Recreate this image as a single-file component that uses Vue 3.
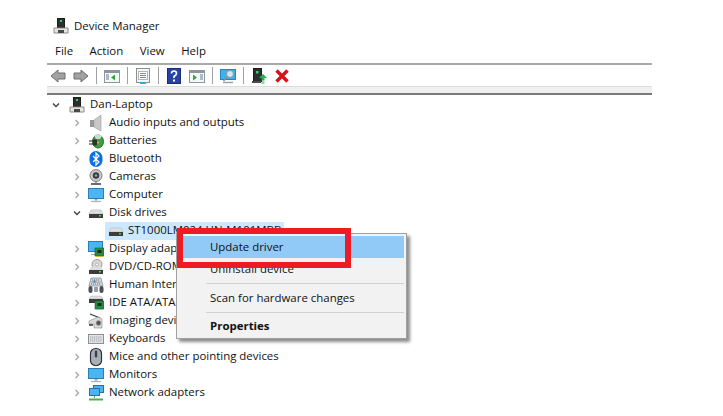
<script setup>
const menus = ['File', 'Action', 'View', 'Help']
const tools = ['back', 'forward', 'sep', 'panel-left', 'sep', 'sheet', 'sep', 'help', 'panel-right', 'sep', 'scan', 'sep', 'update', 'remove']
const rows = [
  { label: 'Audio inputs and outputs', icon: 'audio' },
  { label: 'Batteries', icon: 'battery' },
  { label: 'Bluetooth', icon: 'bluetooth' },
  { label: 'Cameras', icon: 'camera' },
  { label: 'Computer', icon: 'monitor' },
  { label: 'Disk drives', icon: 'disk', open: true },
  { label: 'ST1000LM024 HN-M101MBB', icon: 'disk', child: true },
  { label: 'Display adapters', icon: 'display' },
  { label: 'DVD/CD-ROM drives', icon: 'dvd' },
  { label: 'Human Interface Devices', icon: 'hid' },
  { label: 'IDE ATA/ATAPI controllers', icon: 'ide' },
  { label: 'Imaging devices', icon: 'imaging' },
  { label: 'Keyboards', icon: 'keyboard' },
  { label: 'Mice and other pointing devices', icon: 'mouse' },
  { label: 'Monitors', icon: 'monitor' },
  { label: 'Network adapters', icon: 'network' }
]
</script>

<template>
  <div class="page">
    <svg class="defs" width="0" height="0" aria-hidden="true">
      <defs>
        <symbol id="pc" viewBox="0 0 16 16">
          <rect x="4.5" y="0.5" width="7" height="9" fill="#2b2f33" stroke="#1c1c1c" />
          <rect x="7" y="2" width="2" height="2" fill="#35d04a" />
          <path d="M1 10h14v5H1z" fill="#e8e6e0" stroke="#8a8a86" />
          <path d="M5 12h6v3H5z" fill="#4a4a4a" />
        </symbol>
        <symbol id="back" viewBox="0 0 16 16">
          <path d="M8 2 1 8l7 6v-3h7V5H8z" fill="#a2a2a2" stroke="#6f6f6f" />
        </symbol>
        <symbol id="forward" viewBox="0 0 16 16">
          <path d="M8 2l7 6-7 6v-3H1V5h7z" fill="#a2a2a2" stroke="#6f6f6f" />
        </symbol>
        <symbol id="panel-left" viewBox="0 0 16 16">
          <rect x="0.5" y="2.5" width="15" height="12" fill="#f6f8f8" stroke="#8d979b" />
          <rect x="1" y="3" width="14" height="2" fill="#8d979b" />
          <path d="M2 7h3M2 9h3M2 11h3" stroke="#5f7f96" />
          <path d="M11 6.500v6l-4-3z" fill="#2fa63c" />
        </symbol>
        <symbol id="panel-right" viewBox="0 0 16 16">
          <rect x="0.500" y="2.500" width="15" height="12" fill="#f6f8f8" stroke="#8d979b" />
          <rect x="1" y="3" width="14" height="2" fill="#8d979b" />
          <path d="M11 7h3M11 9h3M11 11h3" stroke="#5f7f96" />
          <path d="M4 6.500v6l4-3z" fill="#2fa63c" />
        </symbol>
        <symbol id="sheet" viewBox="0 0 16 16">
          <rect x="1.500" y="0.500" width="13" height="14" fill="#f4f5f5" stroke="#8f8f8f" />
          <rect x="3.500" y="3.500" width="9" height="8" fill="#fff" stroke="#b5b5b5" />
          <path d="M5 5.500h6M5 7.500h6M5 9.500h6" stroke="#7d8a96" />
          <rect x="5" y="14" width="6" height="2" fill="#2ea8e6" />
        </symbol>
        <symbol id="help" viewBox="0 0 16 16">
          <rect x="1.500" y="0.500" width="13" height="15" fill="#2741a8" stroke="#1b2c78" />
          <path d="M5.500 5.500Q5.500 3 8 3t2.500 2.500Q10.500 7 8 8.500V10" fill="none" stroke="#fff" stroke-width="1.600" />
          <rect x="7" y="11.500" width="2" height="2" fill="#fff" />
        </symbol>
        <symbol id="scan" viewBox="0 0 16 16">
          <rect x="0.500" y="1.500" width="15" height="10" fill="#3fb2ee" stroke="#2683c4" />
          <path d="M3 14.500h10" stroke="#9aa5ad" stroke-width="1.500" />
          <circle cx="10" cy="6" r="3.500" fill="#cfe9f7" stroke="#8a959c" />
          <path d="M7.500 8.500 3.500 13" stroke="#8a8f93" stroke-width="1.500" />
        </symbol>
        <symbol id="update" viewBox="0 0 16 16">
          <rect x="2.500" y="0.500" width="8" height="13" fill="#2b2f33" stroke="#1c1c1c" />
          <rect x="5" y="3" width="2.500" height="2.500" fill="#37d64c" />
          <path d="M1 13h9v2H1z" fill="#4a4a4a" />
          <path d="M12 6l4 4h-2.500v2h-3v-2H8z" fill="#27b14a" />
          <path d="M10.500 13h3M10.500 15h3" stroke="#27b14a" />
        </symbol>
        <symbol id="remove" viewBox="0 0 16 16">
          <path d="M2.500 2.500l11 11M13.500 2.500l-11 11" stroke="#d5121c" stroke-width="3.400" />
        </symbol>
        <symbol id="audio" viewBox="0 0 16 16">
          <path d="M2 5h4v7H2z" fill="#9b9b9b" />
          <path d="M6 5l7-5v16l-7-4z" fill="#c9c9c9" stroke="#9a9a9a" stroke-width="0.600" />
        </symbol>
        <symbol id="battery" viewBox="0 0 16 16">
          <ellipse cx="10" cy="8.500" rx="5.500" ry="6.500" fill="#3f9d47" stroke="#2b6d32" />
          <path d="M6 2.500Q10 0 14 3l-2 3H8z" fill="#cdd8cf" />
          <path d="M1 8h5M1 11h5" stroke="#222" stroke-width="1.200" />
          <rect x="5" y="6.500" width="4" height="6" rx="1" fill="#2e2e2e" />
          <path d="M9 9.500h2" stroke="#e6b13a" stroke-width="1.500" />
        </symbol>
        <symbol id="bluetooth" viewBox="0 0 16 16">
          <rect x="1.500" y="0" width="13" height="16" rx="6.500" fill="#0a6fe0" />
          <path d="M5 5l6 6-3 3V2l3 3-6 6" fill="none" stroke="#fff" stroke-width="1.200" />
        </symbol>
        <symbol id="camera" viewBox="0 0 16 16">
          <circle cx="8" cy="6.500" r="6" fill="#c9c9c9" stroke="#7f7f7f" />
          <circle cx="8" cy="6.500" r="3.200" fill="#3c3c3c" />
          <circle cx="8" cy="6.500" r="1.300" fill="#8da2b4" />
          <path d="M8 12.500v2" stroke="#888" stroke-width="1.500" />
          <path d="M3 15h10" stroke="#4a4a4a" stroke-width="1.600" />
        </symbol>
        <symbol id="monitor" viewBox="0 0 16 16">
          <rect x="0.500" y="1.500" width="15" height="10" fill="#49b6f2" stroke="#2d7eb8" />
          <path d="M6.500 12h3v1.500h-3z" fill="#9aa4ab" />
          <path d="M3 14.500h10" stroke="#a8b0b6" stroke-width="1.200" />
        </symbol>
        <symbol id="disk" viewBox="0 0 16 16">
          <path d="M3 5h10l2 4H1z" fill="#dedede" stroke="#b5b5b5" stroke-width="0.600" />
          <rect x="1" y="9" width="14" height="4" fill="#3c3c3c" />
          <rect x="11" y="10" width="2" height="1.500" fill="#3bd24f" />
        </symbol>
        <symbol id="display" viewBox="0 0 16 16">
          <rect x="0.500" y="0.500" width="14" height="10" fill="#49b6f2" stroke="#2d7eb8" />
          <path d="M3 13.500h6" stroke="#a8b0b6" stroke-width="1.200" />
          <rect x="7" y="7" width="9" height="8" fill="#2c8a3f" stroke="#1f5e2c" stroke-width="0.600" />
          <rect x="9.500" y="9" width="4" height="3" fill="#1c2b20" />
          <path d="M8 15.500h7" stroke="#d7b33c" />
        </symbol>
        <symbol id="dvd" viewBox="0 0 16 16">
          <circle cx="9" cy="5.500" r="5" fill="#d8d8d8" stroke="#9a9a9a" />
          <circle cx="9" cy="5.500" r="1.500" fill="#f5f5f5" stroke="#9a9a9a" stroke-width="0.600" />
          <path d="M3 8h10l2 3H1z" fill="#dedede" />
          <rect x="1" y="11" width="14" height="4" fill="#3c3c3c" />
          <rect x="11" y="12" width="2" height="1.500" fill="#3bd24f" />
        </symbol>
        <symbol id="hid" viewBox="0 0 16 16">
          <path d="M3 1h10l2 8H1z" fill="#d7dbe0" stroke="#7b8087" stroke-width="0.700" />
          <path d="M4 3h8M3.500 5h9M3 7h10" stroke="#70757c" stroke-dasharray="1.200 0.800" />
          <rect x="5.500" y="3.500" width="2" height="2" fill="#2f7fd6" />
          <rect x="0.500" y="9" width="4" height="7" rx="2" fill="#4a4f57" />
          <rect x="11.500" y="9" width="4" height="7" rx="2" fill="#4a4f57" />
          <rect x="6" y="10" width="4" height="5" fill="#9aa0a8" />
        </symbol>
        <symbol id="ide" viewBox="0 0 16 16">
          <path d="M3 1h10l2 3H1z" fill="#dedede" stroke="#b5b5b5" stroke-width="0.500" />
          <rect x="1" y="4" width="14" height="4" fill="#3c3c3c" />
          <rect x="7" y="6" width="9" height="8" fill="#2c8a3f" stroke="#1f5e2c" stroke-width="0.600" />
          <rect x="9.500" y="8" width="4" height="3" fill="#1c2b20" />
          <path d="M8 14.500h7" stroke="#d7b33c" />
        </symbol>
        <symbol id="imaging" viewBox="0 0 16 16">
          <path d="M2 1l10 4" stroke="#333" stroke-width="1.100" />
          <path d="M1 8l9-4 4 2v9H6v-4H1z" fill="#d9d9d9" stroke="#8c8c8c" stroke-width="0.600" />
          <circle cx="10.500" cy="10" r="2.500" fill="#555" stroke="#aaa" stroke-width="0.700" />
          <path d="M1 12h4" stroke="#222" stroke-width="1.400" />
        </symbol>
        <symbol id="keyboard" viewBox="0 0 16 16">
          <rect x="0.500" y="3.500" width="15" height="9" fill="#e3e5e8" stroke="#8c9095" />
          <path d="M2 6h12M2 8h12M2 10h12" stroke="#9b9fa5" stroke-dasharray="1.200 0.700" />
        </symbol>
        <symbol id="mouse" viewBox="0 0 16 16" overflow="visible">
          <rect x="2.500" y="-0.500" width="11" height="17" rx="5" fill="#a9afb6" stroke="#2f3338" stroke-width="1.200" />
          <rect x="6.800" y="1.500" width="2.400" height="7" rx="1.200" fill="#3b3f45" />
        </symbol>
        <symbol id="network" viewBox="0 0 16 16">
          <rect x="5.500" y="0.500" width="10" height="7" fill="#49b6f2" stroke="#2a6fa6" />
          <rect x="1.500" y="3.500" width="10" height="7" fill="#49b6f2" stroke="#2a6fa6" />
          <path d="M6.500 11v2" stroke="#7f8a92" />
          <path d="M1 14.500h14" stroke="#46b04f" stroke-width="2" />
        </symbol>
      </defs>
    </svg>

    <header class="title">
      <svg class="icon"><use href="#pc" /></svg>
      <span>Device Manager</span>
    </header>

    <nav class="menubar">
      <span v-for="m in menus" :key="m">{{ m }}</span>
    </nav>

    <div class="toolbar">
      <template v-for="(t, i) in tools" :key="i">
        <i v-if="t === 'sep'" class="sep"></i>
        <svg v-else class="tool"><use :href="'#' + t" /></svg>
      </template>
    </div>
    <div class="band"></div>

    <main class="tree">
      <div class="root">
        <svg class="chev" viewBox="0 0 8 8"><path d="M1 2.500l3 3 3-3" /></svg>
        <svg class="icon"><use href="#pc" /></svg>
        <span>Dan-Laptop</span>
      </div>
      <div v-for="r in rows" :key="r.label" class="row" :class="{ child: r.child }">
        <template v-if="r.child">
          <div class="selected">
            <svg class="icon"><use :href="'#' + r.icon" /></svg>
            <span>{{ r.label }}</span>
          </div>
        </template>
        <template v-else>
          <svg class="chev" :class="{ dark: r.open }" viewBox="0 0 8 8">
            <path :d="r.open ? 'M1 2.500l3 3 3-3' : 'M2.500 1l3 3-3 3'" />
          </svg>
          <svg class="icon"><use :href="'#' + r.icon" /></svg>
          <span>{{ r.label }}</span>
        </template>
      </div>
    </main>

    <div class="context">
      <div class="item active">Update driver</div>
      <div class="item">Uninstall device</div>
      <hr />
      <div class="item">Scan for hardware changes</div>
      <hr />
      <div class="item bold">Properties</div>
    </div>
    <div class="callout"></div>
  </div>
</template>

<style>
html, body { margin: 0; background: #fff; }
</style>

<style scoped>
.page {
  position: relative;
  width: 723px;
  height: 416px;
  overflow: hidden;
  background: #fff;
  color: #111;
  font: 11.45px/18px "Open Sans", "Noto Sans", sans-serif;
}
.defs { position: absolute; }
.icon { width: 16px; height: 16px; flex: none; overflow: visible; }
.title {
  display: flex;
  align-items: center;
  gap: 5px;
  height: 16px;
  padding: 18px 0 8px 53px;
}
.menubar {
  display: flex;
  gap: 16.5px;
  height: 18px;
  margin: 0 71px 0 47px;
  padding: 0 0 3px 8px;
  align-items: center;
}
.toolbar {
  display: flex;
  align-items: center;
  gap: 7px;
  height: 21px;
  margin: 0 71px 0 47px;
  padding-left: 3px;
  border-top: 2px solid #a9a9a9;
  background: #fff;
}
.tool { width: 16px; height: 18px; flex: none; }
.sep { width: 1px; height: 17px; background: #a0a0a0; flex: none; }
.band {
  height: 6px;
  margin: 0 71px 0 47px;
  background: #f0f0f0;
  border-top: 1px solid #dcdcdc;
  border-bottom: 2px solid #7a7a7a;
}
.tree { padding-top: 1px; }
.root, .row { display: flex; align-items: center; height: 18px; }
.root span, .row span { padding-bottom: 2px; }
.root { padding-left: 52px; }
.root .icon { margin: 0 5px 0 9px; }
.row { padding-left: 73px; }
.row .icon { margin: 0 5px 0 7px; }
.row.child { padding-left: 105px; }
.selected {
  display: flex;
  align-items: center;
  width: 179px;
  height: 18px;
  background: #cce8ff;
  white-space: nowrap;
}
.selected .icon { margin: 0 4px 0 3px; }
.chev {
  width: 8px;
  height: 8px;
  flex: none;
  fill: none;
  stroke: #a6a6a6;
  stroke-width: 1.300;
}
.chev.dark, .root .chev { stroke: #404040; }
.context {
  position: absolute;
  left: 176px;
  top: 233px;
  width: 231px;
  height: 106px;
  padding: 2px 2px 0 3px;
  box-sizing: border-box;
  border: 1px solid #a0a0a0;
  background: #f2f2f2;
  box-shadow: 3px 3px 3px rgba(0, 0, 0, 0.45);
}
.item {
  height: 22px;
  line-height: 22px;
  padding-left: 30px;
  white-space: nowrap;
}
.item.active { background: #91c9f7; }
.item.bold { font-weight: 700; line-height: 20px; }
.context hr {
  height: 1px;
  margin: 3px 0 3px 26px;
  border: 0;
  background: #d0d0d0;
}
.callout {
  position: absolute;
  left: 177px;
  top: 228px;
  width: 162px;
  height: 28px;
  border: 6px solid #ed1c24;
}
</style>
